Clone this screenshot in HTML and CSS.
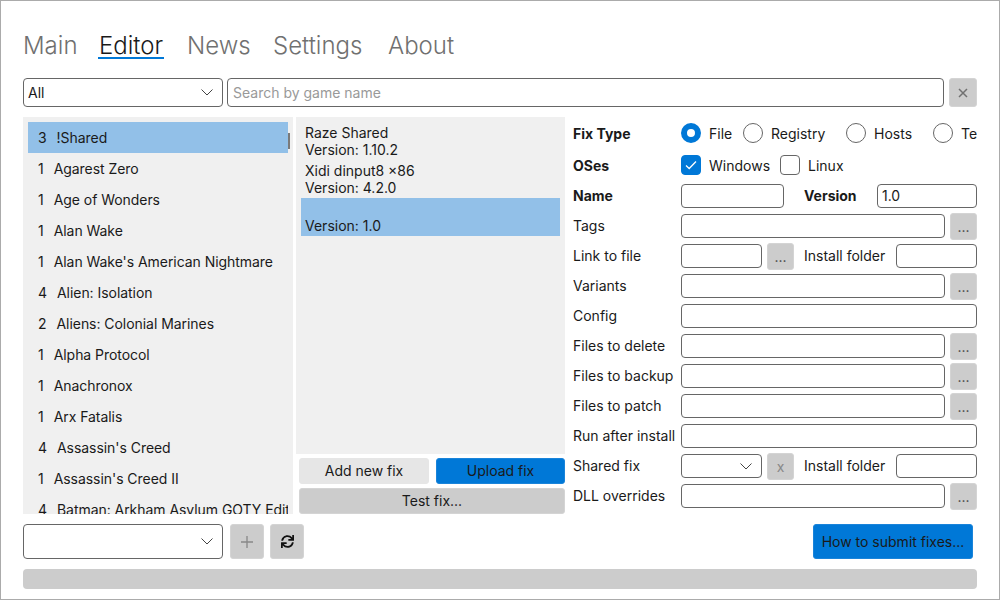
FILE: index.html
```html
<!DOCTYPE html>
<html>
<head>
  <meta charset="utf-8">
  <link rel="stylesheet" href="styles.css">
</head>
<body>
  <div class="window">
    <nav class="tabs">
      <a class="tab">Main</a>
      <a class="tab active">Editor</a>
      <a class="tab">News</a>
      <a class="tab">Settings</a>
      <a class="tab">About</a>
    </nav>

    <div class="filter-row">
      <div class="select filter-select">
        <span>All</span>
        <svg class="chevron" viewBox="0 0 12 7"><path d="M.5.5 6 6 11.5.5"/></svg>
      </div>
      <input class="input search" type="text" placeholder="Search by game name">
      <button class="btn clear-btn">
        <svg viewBox="0 0 10 10"><path d="M1 1 9 9M9 1 1 9"/></svg>
      </button>
    </div>

    <div class="main">
      <div class="game-list">
        <div class="game selected"><span>3</span><span>!Shared</span></div>
        <div class="game"><span>1</span><span>Agarest Zero</span></div>
        <div class="game"><span>1</span><span>Age of Wonders</span></div>
        <div class="game"><span>1</span><span>Alan Wake</span></div>
        <div class="game"><span>1</span><span>Alan Wake's American Nightmare</span></div>
        <div class="game"><span>4</span><span>Alien: Isolation</span></div>
        <div class="game"><span>2</span><span>Aliens: Colonial Marines</span></div>
        <div class="game"><span>1</span><span>Alpha Protocol</span></div>
        <div class="game"><span>1</span><span>Anachronox</span></div>
        <div class="game"><span>1</span><span>Arx Fatalis</span></div>
        <div class="game"><span>4</span><span>Assassin's Creed</span></div>
        <div class="game"><span>1</span><span>Assassin's Creed II</span></div>
        <div class="game"><span>4</span><span>Batman: Arkham Asylum GOTY Edition</span></div>
        <div class="scroll-thumb"></div>
      </div>

      <div class="fix-col">
        <div class="fix-list">
          <div class="fix">Raze Shared<br>Version: 1.10.2</div>
          <div class="fix">Xidi dinput8 ×86<br>Version: 4.2.0</div>
          <div class="fix selected"><br>Version: 1.0</div>
        </div>
        <div class="fix-buttons">
          <button class="btn light">Add new fix</button>
          <button class="btn blue">Upload fix</button>
          <button class="btn wide">Test fix...</button>
        </div>
      </div>

      <div class="form">
        <div class="row row-fixtype">
          <label class="name bold">Fix Type</label>
          <div class="radios">
            <div class="opt"><span class="radio on"></span>File</div>
            <div class="opt"><span class="radio"></span>Registry</div>
            <div class="opt"><span class="radio"></span>Hosts</div>
            <div class="opt"><span class="radio"></span>Text</div>
          </div>
        </div>
        <div class="row row-oses">
          <label class="name bold">OSes</label>
          <div class="opt os-win">
            <span class="check on"><svg viewBox="0 0 12 10"><path d="M1 5.5 4.2 8.5 11 1.5"/></svg></span>Windows
          </div>
          <div class="opt">
            <span class="check"></span>Linux
          </div>
        </div>
        <div class="row">
          <label class="name bold">Name</label>
          <input class="input name-input" type="text">
          <label class="side-label bold version-label">Version</label>
          <input class="input version-input" type="text" value="1.0">
        </div>
        <div class="row">
          <label class="name">Tags</label>
          <input class="input grow" type="text">
          <button class="btn dots">...</button>
        </div>
        <div class="row">
          <label class="name">Link to file</label>
          <input class="input short" type="text">
          <button class="btn dots">...</button>
          <label class="side-label">Install folder</label>
          <input class="input short" type="text">
        </div>
        <div class="row">
          <label class="name">Variants</label>
          <input class="input grow" type="text">
          <button class="btn dots">...</button>
        </div>
        <div class="row">
          <label class="name">Config</label>
          <input class="input grow" type="text">
        </div>
        <div class="row">
          <label class="name">Files to delete</label>
          <input class="input grow" type="text">
          <button class="btn dots">...</button>
        </div>
        <div class="row">
          <label class="name">Files to backup</label>
          <input class="input grow" type="text">
          <button class="btn dots">...</button>
        </div>
        <div class="row">
          <label class="name">Files to patch</label>
          <input class="input grow" type="text">
          <button class="btn dots">...</button>
        </div>
        <div class="row">
          <label class="name">Run after install</label>
          <input class="input grow" type="text">
        </div>
        <div class="row">
          <label class="name">Shared fix</label>
          <div class="select short">
            <svg class="chevron" viewBox="0 0 12 7"><path d="M.5.5 6 6 11.5.5"/></svg>
          </div>
          <button class="btn dots muted">x</button>
          <label class="side-label">Install folder</label>
          <input class="input short" type="text">
        </div>
        <div class="row">
          <label class="name">DLL overrides</label>
          <input class="input grow" type="text">
          <button class="btn dots">...</button>
        </div>
      </div>
    </div>

    <div class="bottom-row">
      <div class="select bottom-select">
        <svg class="chevron" viewBox="0 0 12 7"><path d="M.5.5 6 6 11.5.5"/></svg>
      </div>
      <button class="btn icon-btn plus-btn">
        <svg viewBox="0 0 12 12"><path d="M6 0V12M0 6H12"/></svg>
      </button>
      <button class="btn icon-btn">
        <svg class="sync" viewBox="0 0 512 512"><path d="M440.65 12.57l4 82.77A247.16 247.16 0 0 0 255.83 8C134.73 8 33.91 94.92 12.29 209.82A12 12 0 0 0 24.09 224h49.05a12 12 0 0 0 11.67-9.26 175.91 175.91 0 0 1 317-56.94l-101.46-4.86a12 12 0 0 0-12.57 12v47.41a12 12 0 0 0 12 12H500a12 12 0 0 0 12-12V12a12 12 0 0 0-12-12h-47.37a12 12 0 0 0-11.98 12.57zM255.83 432a175.61 175.61 0 0 1-146-77.8l101.8 4.87a12 12 0 0 0 12.57-12v-47.4a12 12 0 0 0-12-12H12a12 12 0 0 0-12 12V500a12 12 0 0 0 12 12h47.35a12 12 0 0 0 12-12.6l-4.15-82.57A247.17 247.17 0 0 0 255.83 504c121.11 0 221.93-86.92 243.55-201.82a12 12 0 0 0-11.8-14.18h-49.05a12 12 0 0 0-11.67 9.26A175.86 175.86 0 0 1 255.83 432z"/></svg>
      </button>
      <button class="btn blue submit-btn">How to submit fixes...</button>
    </div>

    <div class="progress"></div>
  </div>
</body>
</html>
```

FILE: styles.css
```css
* {
  box-sizing: border-box;
}

body {
  margin: 0;
  font-family: Inter, "Liberation Sans", sans-serif;
  font-size: 14px;
  color: #1a1a1a;
  background-color: #fff;
}

.window {
  width: 1000px;
  height: 600px;
  padding: 33px 22px 0;
  border: 1px solid #ababab;
  overflow: hidden;
}

/* top navigation */
.tabs {
  display: grid;
  grid-template-columns: 76px 88px 86px 115px auto;
  justify-items: start;
  height: 25px;
  margin-bottom: 19px;
}

.tab {
  height: 25px;
  font-size: 24px;
  font-weight: 300;
  line-height: 23px;
  color: #707070;
  border-bottom: 2px solid transparent;
}

.tab.active {
  margin-left: -1px;
  padding: 0 1px;
  color: #1a1a1a;
  border-bottom-color: #0078d7;
}

/* shared controls */
.input,
.select {
  height: 24px;
  padding: 0 4px;
  font: inherit;
  color: inherit;
  background-color: #fff;
  border: 1px solid #666;
  border-radius: 4px;
  outline: none;
}

.row .input {
  padding-bottom: 2px;
}

.input::placeholder {
  color: #999;
}

.select {
  display: flex;
  align-items: center;
  justify-content: space-between;
}

.chevron {
  flex: none;
  width: 12px;
  height: 7px;
  margin-left: auto;
  margin-right: 5px;
  fill: none;
  stroke: #444;
  stroke-width: 1;
}

.btn {
  padding: 0;
  font: inherit;
  color: #1a1a1a;
  background-color: #ccc;
  border: 1px solid #d4d4d4;
  border-radius: 3px;
}

.btn.light {
  background-color: #e6e6e6;
  border-color: #e6e6e6;
}

.btn.blue {
  background-color: #0078d7;
  border-color: #1a84da;
}

/* search row */
.filter-row {
  display: flex;
  height: 29px;
  margin-bottom: 10px;
}

.filter-select {
  width: 200px;
  height: 29px;
}

.search {
  width: 717px;
  height: 29px;
  margin-left: 4px;
  padding-left: 5px;
}

.clear-btn {
  display: flex;
  align-items: center;
  justify-content: center;
  width: 28px;
  height: 29px;
  margin-left: 5px;
}

.clear-btn svg {
  width: 10px;
  height: 10px;
  fill: none;
  stroke: #707070;
  stroke-width: 1.5;
}

/* three panels */
.main {
  display: flex;
  height: 397px;
  margin-bottom: 10px;
}

.game-list {
  position: relative;
  flex: none;
  width: 270px;
  padding: 5px;
  overflow: hidden;
  background-color: #f0f0f0;
}

.game {
  display: flex;
  align-items: center;
  gap: 10px;
  height: 31px;
  padding-left: 10px;
  overflow: hidden;
  letter-spacing: -0.05px;
  white-space: nowrap;
}

.game.selected,
.fix.selected {
  background-color: #92c0e8;
}

.scroll-thumb {
  position: absolute;
  top: 16px;
  right: 3px;
  width: 2px;
  height: 16px;
  background-color: #7a7a7a;
}

.fix-col {
  flex: none;
  width: 269px;
  margin-left: 3px;
}

.fix-list {
  height: 337px;
  padding: 5px;
  background-color: #f0f0f0;
}

.fix {
  height: 38px;
  padding: 2px 4px 0;
  line-height: 17px;
  white-space: nowrap;
}

.fix-buttons {
  display: grid;
  grid-template-columns: 130px 129px;
  grid-auto-rows: 26px;
  justify-content: space-between;
  gap: 4px 7px;
  padding: 4px 0 0 3px;
}

.fix-buttons .btn {
  padding-bottom: 2px;
}

.fix-buttons .wide {
  grid-column: 1 / 3;
}

/* fix properties */
.form {
  flex: none;
  width: 404px;
  margin-left: 8px;
  overflow: hidden;
}

.row {
  display: flex;
  align-items: center;
  height: 30px;
  white-space: nowrap;
}

.row label {
  margin-top: -2px;
}

.row-fixtype {
  height: 32px;
  margin-bottom: 2px;
}

.row-oses {
  height: 28px;
  margin-bottom: 2px;
}

.row-fixtype label,
.row-oses label {
  margin-top: 0;
}

.name {
  flex: none;
  width: 108px;
}

.bold {
  font-weight: 700;
}

.radios {
  display: grid;
  grid-template-columns: 62px 103px 87px 60px;
}

.opt {
  display: flex;
  align-items: center;
  gap: 8px;
}

.radio,
.check {
  flex: none;
  width: 20px;
  height: 20px;
  background-color: #fff;
  border: 1px solid #666;
}

.radio {
  border-radius: 50%;
}

.radio.on {
  border: 6px solid #0078d7;
}

.check {
  display: flex;
  align-items: center;
  justify-content: center;
  border-radius: 4px;
}

.check.on {
  background-color: #0078d7;
  border-color: #0078d7;
}

.check svg {
  width: 12px;
  height: 10px;
  fill: none;
  stroke: #fff;
  stroke-width: 1.3;
}

.os-win {
  margin-right: 10px;
}

.grow {
  flex: 1;
  min-width: 0;
}

.short {
  width: 81px;
}

.name-input {
  width: 103px;
}

.version-input {
  width: 100px;
}

.side-label {
  flex: none;
  width: 92px;
  margin-left: 10px;
}

.version-label {
  width: 73px;
  margin-left: 20px;
}

.dots {
  flex: none;
  width: 27px;
  height: 27px;
  margin-left: 5px;
  color: #444;
}

.dots.muted {
  color: #888;
}

/* bottom row */
.bottom-row {
  display: flex;
  align-items: center;
  height: 35px;
  margin-bottom: 10px;
}

.bottom-select {
  width: 200px;
  height: 35px;
}

.icon-btn {
  display: flex;
  align-items: center;
  justify-content: center;
  width: 34px;
  height: 35px;
  margin-left: 6px;
}

.plus-btn {
  margin-left: 7px;
}

.plus-btn svg {
  width: 12px;
  height: 12px;
  fill: none;
  stroke: #888;
  stroke-width: 1.3;
}

.sync {
  width: 13px;
  height: 13px;
  fill: #111;
}

.submit-btn {
  width: 160px;
  height: 35px;
  margin-left: auto;
  margin-right: 4px;
}

.progress {
  height: 20px;
  background-color: #ccc;
  border-radius: 4px;
}
```
